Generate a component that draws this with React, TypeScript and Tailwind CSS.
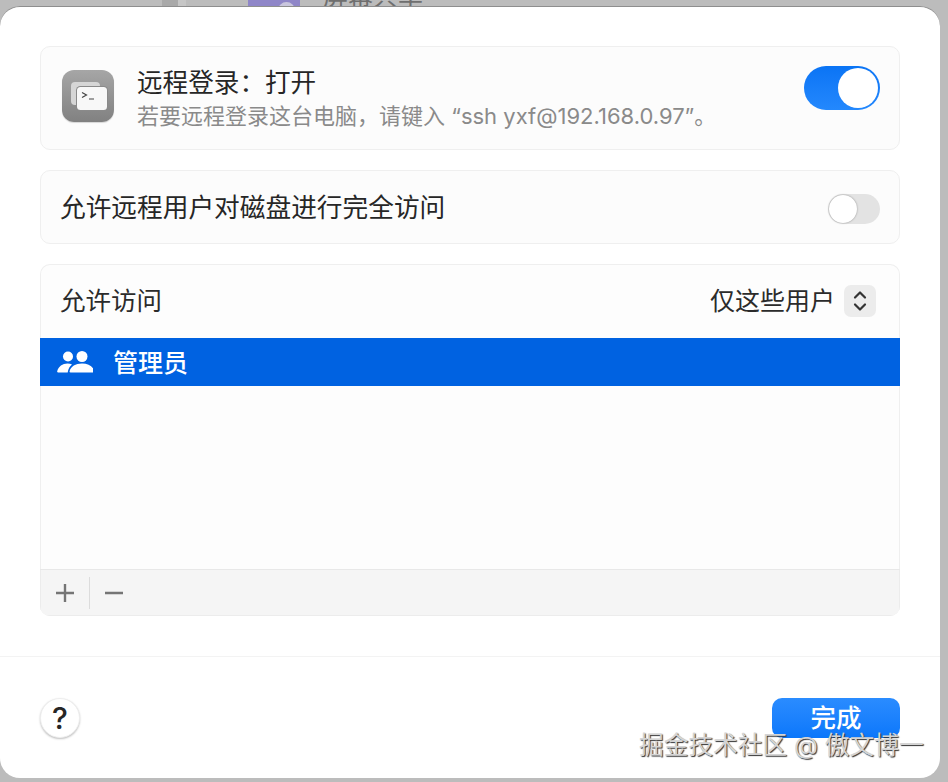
import React from 'react';

const font = "font-['Inter','Noto_Sans_CJK_SC','Liberation_Sans',sans-serif]";

const TerminalIcon = () => (
  <svg width="52" height="52" viewBox="0 0 52 52" className="rounded-[12px] bg-gradient-to-b from-[#a6a6a6] to-[#818181] shadow-[0_1px_1px_rgba(0,0,0,0.15)]">
    <rect x="9" y="12" width="29" height="23" rx="4" fill="#d6d6d6" />
    <rect x="14" y="16" width="32" height="25" rx="4.500" fill="#8a8a8a" />
    <rect x="15" y="17" width="30" height="23" rx="3.500" fill="#f8f8f8" />
    <path d="M20 22.500l4.500 2.500L20 27.500" fill="none" stroke="#444" strokeWidth="1.200" />
    <path d="M27 29h5" fill="none" stroke="#444" strokeWidth="1.200" />
  </svg>
);

const UsersIcon = () => (
  <svg width="36" height="24" viewBox="0 0 36 24" fill="#fff">
    <circle cx="11" cy="6.500" r="5" />
    <circle cx="25" cy="6.500" r="5.500" />
    <path d="M1 22.500c-.6 0-1-.5-.8-1.200C1.500 16.500 5.500 13.500 10.500 13.500c1.700 0 3.200.3 4.500 1-2.300 1.700-3.800 4.300-4.300 8z" />
    <path d="M13.500 22.500c-.7 0-1.100-.5-.9-1.200C13.800 16.500 18.500 13.500 25 13.500s11.200 3 12.400 7.800c.2.700-.2 1.200-.9 1.200z" />
  </svg>
);

export default function App() {
  return (
    <div className={`w-[948px] h-[782px] overflow-hidden bg-[#bcbcbc] relative ${font}`}>
      {/* window behind the sheet, only a strip of it shows */}
      <div className="h-[6px] relative overflow-hidden">
        <div className="absolute left-[162px] top-0 w-[16px] h-[6px] bg-[#a9a9a9]" />
        <div className="absolute left-[178px] top-0 w-[8px] h-[6px] bg-[#c6c6c6]" />
        <div className="absolute left-[248px] top-0 w-[52px] h-[6px] bg-[#8f86c8]" />
        <div className="absolute left-[278px] top-[2px] w-[17px] h-[17px] rounded-full bg-[#c9c6dd]" />
        <div className="absolute left-[323px] top-[-16px] text-[25px] leading-[25px] text-[#6f6f6f] whitespace-nowrap">屏幕共享</div>
      </div>

      <div className="w-[940px] h-[772px] bg-white rounded-[20px] flex flex-col border-t border-[#8e8e8e]">
        <div className="px-[40px] pt-[39px] flex flex-col">
          <div className="h-[104px] rounded-[10px] border border-[#efefef] bg-[#fcfcfc] pl-[21px] pr-[19px] flex">
            <div className="mt-[23px] h-[52px]">
              <TerminalIcon />
            </div>
            <div className="ml-[23px] mt-[21px] flex-1">
              <div className="text-[25.600px] leading-[30px] text-[#262626]">远程登录：打开</div>
              <div className="mt-[4px] text-[22px] leading-[28px] text-[#8a8a8a] whitespace-nowrap">若要远程登录这台电脑，请键入 “ssh yxf@192.168.0.97”。</div>
            </div>
            <div className="mt-[19px] w-[76px] h-[44px] rounded-full bg-gradient-to-b from-[#0a74f5] to-[#2388fd] p-[2px] flex justify-end">
              <div className="w-[40px] h-[40px] rounded-full bg-white" />
            </div>
          </div>

          <div className="mt-[20px] h-[74px] rounded-[10px] border border-[#efefef] bg-[#fcfcfc] pl-[19px] pr-[19px] flex items-center justify-between">
            <div className="mt-[2px] text-[25.700px] leading-[30px] text-[#262626]">允许远程用户对磁盘进行完全访问</div>
            <div className="mt-[4px] w-[52px] h-[30px] rounded-full bg-[#e3e3e3] p-[1px]">
              <div className="w-[28px] h-[28px] rounded-full bg-white shadow-[0_0_2px_rgba(0,0,0,0.4)]" />
            </div>
          </div>

          <div className="mt-[20px] h-[352px] rounded-[10px] shadow-[inset_0_0_0_1px_#efefef] bg-[#fdfdfd] flex flex-col overflow-hidden">
            <div className="h-[74px] pl-[20px] pr-[24px] flex items-center justify-between">
              <div className="text-[25.500px] leading-[30px] text-[#2b2b2b]">允许访问</div>
              <div className="flex items-center gap-[9px]">
                <div className="text-[25px] leading-[30px] text-[#2b2b2b]">仅这些用户</div>
                <div className="w-[32px] h-[32px] rounded-[7px] bg-[#ececec] flex items-center justify-center">
                  <svg width="14" height="24" viewBox="0 0 14 24" fill="none" stroke="#333" strokeWidth="2.200" strokeLinecap="round" strokeLinejoin="round">
                    <path d="M2 8.500l5-5 5 5" />
                    <path d="M2 15.500l5 5 5-5" />
                  </svg>
                </div>
              </div>
            </div>
            <div className="h-[48px] bg-[#0062e1] pl-[17px] flex items-center">
              <UsersIcon />
              <div className="ml-[20px] mt-[2px] text-[25px] leading-[30px] font-medium text-white">管理员</div>
            </div>
            <div className="flex-1" />
            <div className="h-[47px] bg-[#f5f5f5] shadow-[inset_0_1px_0_#e8e8e8,inset_0_-1px_0_#ececec,inset_1px_0_0_#ececec,inset_-1px_0_0_#ececec] flex items-center">
              <div className="w-[50px] h-[32px] border-r border-[#dcdcdc] flex items-center justify-center">
                <svg width="18" height="18" viewBox="0 0 18 18" stroke="#757575" strokeWidth="2.400">
                  <path d="M0 9h18M9 0v18" />
                </svg>
              </div>
              <div className="w-[48px] flex items-center justify-center">
                <svg width="18" height="18" viewBox="0 0 18 18" stroke="#757575" strokeWidth="2.400">
                  <path d="M0 9h18" />
                </svg>
              </div>
            </div>
          </div>
        </div>

        <div className="mt-[40px] border-t border-[#f3f3f3] flex-1 px-[40px] pt-[41px] flex items-start justify-between">
          <button className="w-[40px] h-[40px] rounded-full bg-white border border-[#eeeeee] shadow-[0_1px_2px_rgba(0,0,0,0.25)] text-[30px] leading-none font-medium text-[#262626] flex items-center justify-center">?</button>
          <button className="w-[128px] h-[40px] rounded-[10px] bg-gradient-to-b from-[#2a8cff] to-[#0a77fb] text-[25.500px] leading-[36px] font-medium text-white">完成</button>
        </div>
      </div>

      {/* watermark over the sheet */}
      <div className="absolute left-[639px] top-[729px] text-[24.700px] leading-[32px] text-[#d4d4d4] [text-shadow:1px_1px_1px_#333] whitespace-nowrap">掘金技术社区 @ 傲文博一</div>
    </div>
  );
}
